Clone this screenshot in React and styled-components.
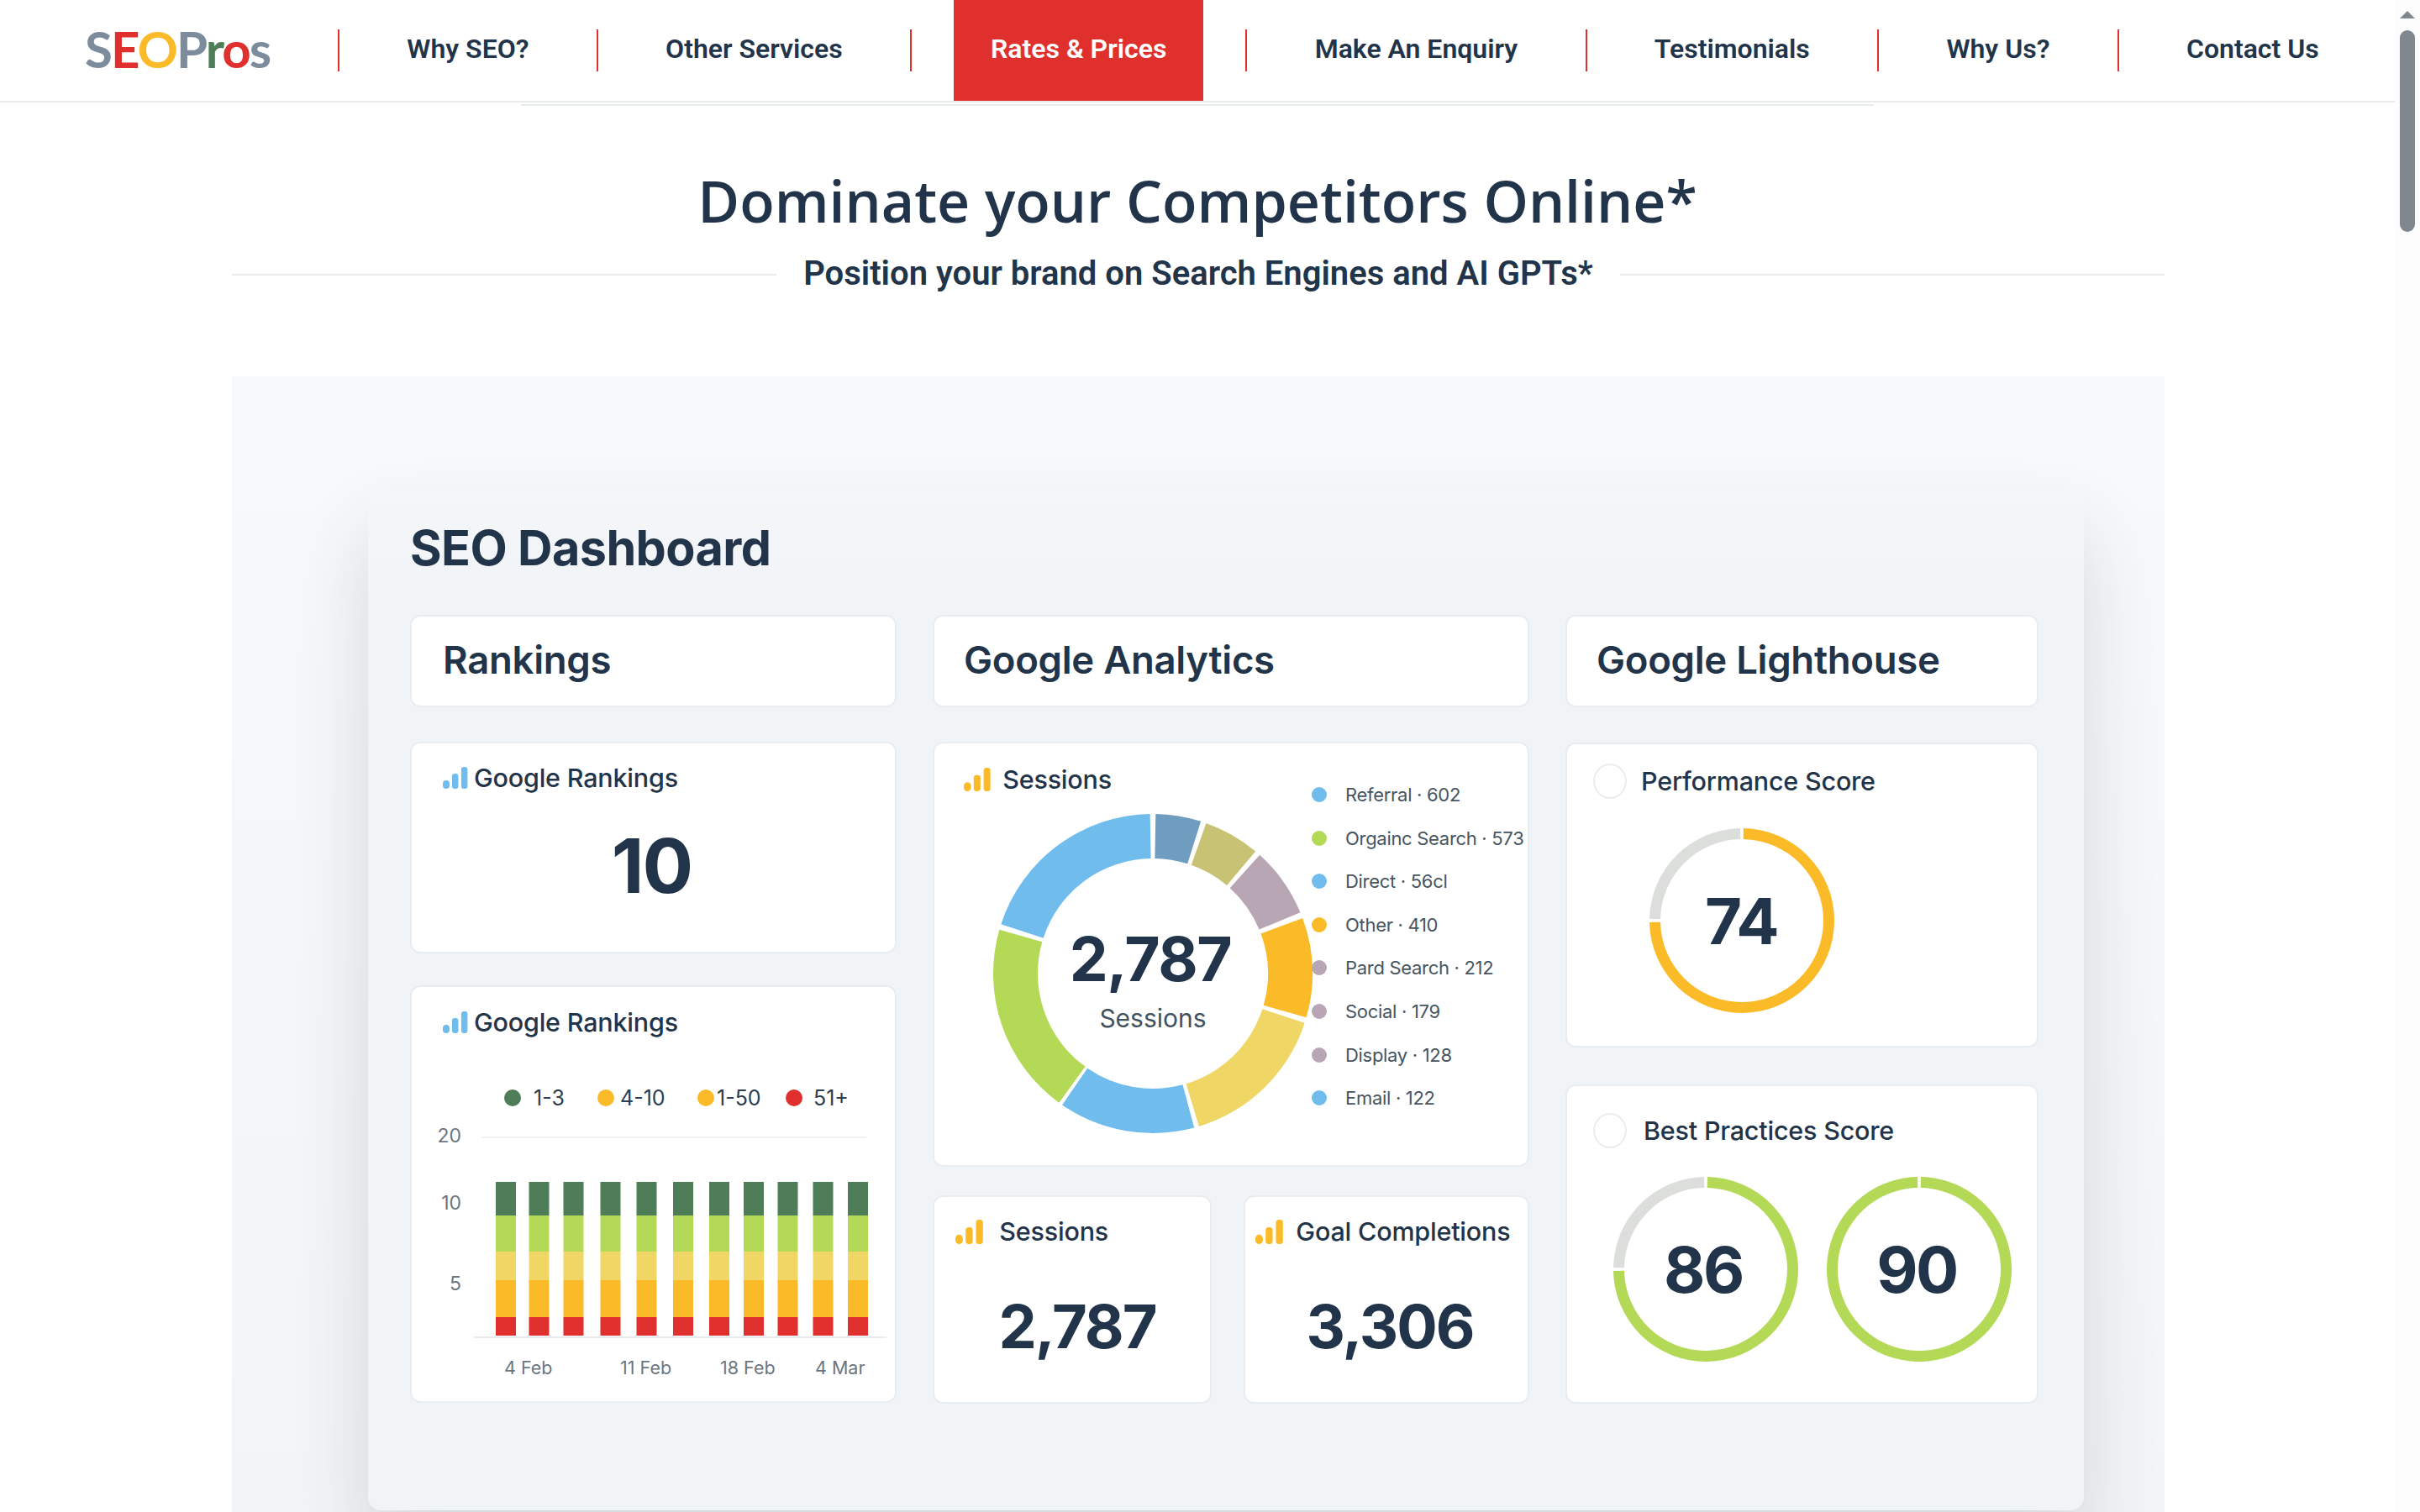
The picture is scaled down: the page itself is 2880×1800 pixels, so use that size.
import React from 'react';
import styled, { createGlobalStyle } from 'styled-components';

const INK = '#22344a';
const RED = '#e0302d';
const GREEN = '#4e7d57';
const LIME = '#b4d957';
const SOFT = '#f0d765';
const ORANGE = '#fbbb28';
const BLUE = '#70bced';
const MAUVE = '#b9a6b5';
const SLATE = '#6f9dc0';
const OLIVE = '#c7c274';
const STEEL = '#7c8c9c';

const GlobalStyle = createGlobalStyle`
  html, body { margin: 0; padding: 0; height: 100%; background: #fff; overflow: hidden; }
  * { box-sizing: border-box; }
`;

const Shell = styled.div`
  display: flex;
  width: 2880px;
  height: 1800px;
  overflow: hidden;
`;

const Page = styled.main`
  width: 2850px;
  flex: none;
  color: ${INK};
`;

const Rail = styled.div`
  width: 30px;
  flex: none;
  background: #fdfdfd;
  padding: 13px 6px 0;
  display: flex;
  flex-direction: column;
  align-items: center;
`;

const RailArrow = styled.div`
  width: 0;
  height: 0;
  border-left: 9px solid transparent;
  border-right: 9px solid transparent;
  border-bottom: 9px solid #80878f;
`;

const RailThumb = styled.div`
  width: 18px;
  height: 240px;
  margin-top: 14px;
  border-radius: 9px;
  background: #80878f;
`;

const Header = styled.header`
  height: 122px;
  display: flex;
  align-items: flex-start;
  border-bottom: 2px solid #e7ebec;
`;

const Logo = styled.div`
  width: 402px;
  height: 120px;
  padding: 24px 0 0 101px;
  font: 700 60px/68px Lato, sans-serif;
  letter-spacing: -2px;
  white-space: nowrap;
`;

const LogoLetter = styled.span`
  color: ${p => p.$color};
`;

const NavSep = styled.span`
  flex: none;
  width: 2px;
  height: 50px;
  margin-top: 35px;
  background: ${RED};
`;

const NavLink = styled.a`
  flex: none;
  height: 120px;
  padding: 0 ${p => (p.$active ? '44px' : '80.3px')} 4px;
  margin: 0 ${p => (p.$active ? '50px' : '0')};
  display: flex;
  align-items: center;
  font: 600 32px/40px Roboto, sans-serif;
  color: ${p => (p.$active ? '#fff' : INK)};
  background: ${p => (p.$active ? RED : 'transparent')};
`;

const Rule = styled.div`
  height: 2px;
  width: 1610px;
  margin: 2px 0 0 620px;
  background: #e7ebec;
`;

const Hero = styled.section`
  padding-top: 67px;
  text-align: center;
`;

const Title = styled.h1`
  margin: 0;
  font: 600 68px/92px "Open Sans", sans-serif;
  color: ${INK};
`;

const SubRow = styled.div`
  display: flex;
  align-items: center;
  width: 2300px;
  margin: 17px 0 0 276px;
  gap: 32px;
`;

const SubLine = styled.span`
  flex: 1;
  height: 2px;
  background: #e7ebec;
`;

const Sub = styled.h2`
  margin: 0 0 2px;
  font: 600 40px/48px Roboto, sans-serif;
  color: ${INK};
`;

const Panel = styled.section`
  width: 2300px;
  height: 1352px;
  margin: 96px 0 0 276px;
  padding: 136px 0 0 162px;
  background: linear-gradient(#f7f9fa, #f2f5f7);
`;

const Dashboard = styled.div`
  width: 2042px;
  height: 1214px;
  padding: 32px 0 0 50px;
  background: linear-gradient(#f4f6f8, #f1f4f7 140px);
  border-radius: 16px;
  box-shadow: 0 50px 90px rgba(50, 60, 70, 0.16);
`;

const DashTitle = styled.h2`
  margin: 0 0 43px;
  height: 73px;
  font: 700 57.5px/73px Inter, sans-serif;
  letter-spacing: -0.6px;
  color: ${INK};
`;

const Columns = styled.div`
  display: flex;
  align-items: flex-start;
  gap: 43px;
`;

const Column = styled.div`
  width: ${p => p.$w}px;
  flex: none;
  display: flex;
  flex-direction: column;
`;

const Card = styled.div`
  height: ${p => p.$h}px;
  margin-top: ${p => p.$mt || 0}px;
  width: ${p => (p.$w ? `${p.$w}px` : 'auto')};
  background: #fff;
  border: 2px solid #e9edf0;
  border-radius: 12px;
  flex: none;
`;

const HeadCard = styled(Card)`
  height: 110px;
  padding: 0 0 2px ${p => p.$pad}px;
  display: flex;
  align-items: center;
  font: 600 45.5px/56px Inter, sans-serif;
  letter-spacing: -0.3px;
  color: ${INK};
`;

const CardHead = styled.div`
  display: flex;
  align-items: center;
  gap: ${p => p.$gap}px;
  padding: ${p => p.$top}px 0 0 ${p => p.$left}px;
  font: 500 30.5px/40px Inter, sans-serif;
  letter-spacing: -0.2px;
  white-space: nowrap;
  color: ${INK};
`;

const BigValue = styled.div`
  text-align: center;
  padding-top: ${p => p.$top}px;
  margin-left: ${p => p.$shift || 0}px;
  font: 700 ${p => p.$size}px/1 Inter, sans-serif;
  letter-spacing: -2px;
  color: ${INK};
`;

const Legend = styled.div`
  display: flex;
  padding: 54px 0 0 ${p => p.$left}px;
  height: 103px;
  font: 400 25px/32px Inter, sans-serif;
  color: #2c3e50;
`;

const LegendItem = styled.span`
  display: flex;
  align-items: center;
  height: 32px;
  width: ${p => p.$w}px;
  gap: ${p => p.$gap}px;
`;

const Dot = styled.i`
  width: ${p => p.$size}px;
  height: ${p => p.$size}px;
  flex: none;
  border-radius: 50%;
  background: ${p => p.$color};
`;

const SessionsBody = styled.div`
  display: grid;
  grid-template-columns: 449px 1fr;
  height: 100%;
`;

const DonutWrap = styled.div`
  display: grid;
  place-items: center;
  width: 392px;
  height: 392px;
  margin: 15px 0 0 64px;
  > * { grid-area: 1 / 1; }
`;

const DonutCenter = styled.div`
  text-align: center;
  padding-top: 12px;
`;

const DonutValue = styled.div`
  padding-right: 6px;
  font: 700 73px/84px Inter, sans-serif;
  letter-spacing: -1.5px;
  color: ${INK};
`;

const DonutLabel = styled.div`
  margin-top: 9px;
  font: 400 30px/38px Inter, sans-serif;
  color: #42525f;
`;

const SourceList = styled.ul`
  list-style: none;
  margin: 0;
  padding: 46px 0 0 0;
  display: flex;
  flex-direction: column;
  gap: 21.6px;
`;

const Source = styled.li`
  display: flex;
  align-items: center;
  gap: 22px;
  height: 30px;
  font: 400 22px/30px Inter, sans-serif;
  letter-spacing: -0.3px;
  white-space: nowrap;
  color: #46555f;
`;

const BottomRow = styled.div`
  display: flex;
  gap: 38px;
  margin-top: 34px;
`;

const HollowMark = styled.span`
  width: 40px;
  height: 42px;
  flex: none;
  border-radius: 50%;
  border: 2px solid #e9edf0;
`;

const RingRow = styled.div`
  display: flex;
  padding: ${p => p.$top}px 0 0 ${p => p.$left}px;
  gap: ${p => p.$gap || 0}px;
`;

const RingWrap = styled.div`
  display: grid;
  place-items: center;
  width: 220px;
  height: 220px;
  > * { grid-area: 1 / 1; }
`;

const RingValue = styled.span`
  padding-right: ${p => p.$nudge || 0}px;
  font: 700 76px/1 Inter, sans-serif;
  letter-spacing: -2.5px;
  color: ${INK};
`;

const BarsIcon = ({ color, h = 26 }) => (
  <svg width={h * 1.15} height={h} viewBox="0 0 30 26" fill={color}>
    <rect x="0" y="16" width="8" height="10" rx="4" />
    <rect x="11" y="8" width="7.5" height="18" rx="3.2" />
    <rect x="22" y="0" width="7.5" height="26" rx="3.2" />
  </svg>
);

const polar = (cx, cy, r, deg) => {
  const a = ((deg - 90) * Math.PI) / 180;
  return [cx + r * Math.cos(a), cy + r * Math.sin(a)];
};

const slicePath = (from, to, rOut, rIn, c) => {
  const large = to - from > 180 ? 1 : 0;
  const [x1, y1] = polar(c, c, rOut, from);
  const [x2, y2] = polar(c, c, rOut, to);
  const [x3, y3] = polar(c, c, rIn, to);
  const [x4, y4] = polar(c, c, rIn, from);
  return `M${x1} ${y1}A${rOut} ${rOut} 0 ${large} 1 ${x2} ${y2}L${x3} ${y3}A${rIn} ${rIn} 0 ${large} 0 ${x4} ${y4}Z`;
};

const SLICES = [
  [1, 17.5, SLATE],
  [19.5, 40, OLIVE],
  [42, 67.5, MAUVE],
  [69.7, 106, ORANGE],
  [108, 163.2, SOFT],
  [165, 214.6, BLUE],
  [216, 286, LIME],
  [288, 359, BLUE],
];

const SOURCES = [
  ['Referral · 602', BLUE],
  ['Orgainc Search · 573', LIME],
  ['Direct · 56cl', BLUE],
  ['Other · 410', ORANGE],
  ['Pard Search · 212', MAUVE],
  ['Social · 179', MAUVE],
  ['Display · 128', MAUVE],
  ['Email · 122', BLUE],
];

const Ring = ({ value, color, track, nudge }) => {
  const c = 110;
  return (
    <RingWrap>
      <svg width="220" height="220" viewBox="0 0 220 220">
        {track && <path d={slicePath(271, 359, 110, 97, c)} fill="#dcdedb" />}
        <path d={slicePath(1, track ? 269 : 359, 110, 97, c)} fill={color} />
      </svg>
      <RingValue $nudge={nudge}>{value}</RingValue>
    </RingWrap>
  );
};

const BAR_X = [590, 629.5, 670.5, 714.5, 757.5, 801, 844, 885, 925.5, 967.5, 1009];
const SEGMENTS = [
  [1407, 40, GREEN],
  [1447, 43, LIME],
  [1490, 34, SOFT],
  [1524, 44, ORANGE],
  [1568, 22, RED],
];

// chart coordinates are page pixels, the viewBox shifts them into the card
const RankChart = () => (
  <svg width="574" height="306" viewBox="490 1340 574 306">
    <line x1="573" x2="1031" y1="1354" y2="1354" stroke="#f0f2f3" strokeWidth="2" />
    <line x1="564" x2="1055" y1="1592" y2="1592" stroke="#e8ecf0" strokeWidth="2" />
    <g fill="#6b7680" fontFamily="Inter, sans-serif" fontSize="23" textAnchor="end">
      <text x="549" y="1360">20</text>
      <text x="549" y="1440">10</text>
      <text x="549" y="1536">5</text>
    </g>
    {BAR_X.map(x =>
      SEGMENTS.map(([y, h, fill]) => (
        <rect key={`${x}-${y}`} x={x} y={y} width="24" height={h} fill={fill} />
      ))
    )}
    <g fill="#6b7680" fontFamily="Inter, sans-serif" fontSize="21.5">
      <text x="600" y="1636">4 Feb</text>
      <text x="738" y="1636">11 Feb</text>
      <text x="857" y="1636">18 Feb</text>
      <text x="970" y="1636">4 Mar</text>
    </g>
  </svg>
);

const NAV = ['Why SEO?', 'Other Services', 'Rates & Prices', 'Make An Enquiry', 'Testimonials', 'Why Us?', 'Contact Us'];
const LOGO = [['S', STEEL], ['E', RED], ['O', ORANGE], ['P', STEEL], ['r', GREEN], ['o', RED], ['s', STEEL]];

export default function App() {
  return (
    <Shell>
      <GlobalStyle />
      <Page>
        <Header>
          <Logo>
            {LOGO.map(([ch, color], i) => (
              <LogoLetter key={i} $color={color}>{ch}</LogoLetter>
            ))}
          </Logo>
          {NAV.map(label => (
            <React.Fragment key={label}>
              <NavSep />
              <NavLink $active={label === 'Rates & Prices'}>{label}</NavLink>
            </React.Fragment>
          ))}
        </Header>
        <Rule />
        <Hero>
          <Title>Dominate your Competitors Online*</Title>
          <SubRow>
            <SubLine />
            <Sub>Position your brand on Search Engines and AI GPTs*</Sub>
            <SubLine />
          </SubRow>
        </Hero>
        <Panel>
          <Dashboard>
            <DashTitle>SEO Dashboard</DashTitle>
            <Columns>
              <Column $w={579}>
                <HeadCard $pad={37}>Rankings</HeadCard>
                <Card $h={252} $mt={41}>
                  <CardHead $top={21} $left={37} $gap={7}>
                    <BarsIcon color={BLUE} />
                    Google Rankings
                  </CardHead>
                  <BigValue $size={90} $top={40} $shift={-4}>10</BigValue>
                </Card>
                <Card $h={497} $mt={38}>
                  <CardHead $top={22} $left={37} $gap={7}>
                    <BarsIcon color={BLUE} />
                    Google Rankings
                  </CardHead>
                  <Legend $left={110}>
                    <LegendItem $w={111} $gap={15}><Dot $size={20} $color={GREEN} />1-3</LegendItem>
                    <LegendItem $w={119} $gap={7}><Dot $size={20} $color={ORANGE} />4-10</LegendItem>
                    <LegendItem $w={105} $gap={3}><Dot $size={20} $color={ORANGE} />1-50</LegendItem>
                    <LegendItem $w={80} $gap={13}><Dot $size={20} $color={RED} />51+</LegendItem>
                  </Legend>
                  <RankChart />
                </Card>
              </Column>
              <Column $w={710}>
                <HeadCard $pad={35}>Google Analytics</HeadCard>
                <Card $h={506} $mt={41}>
                  <SessionsBody>
                    <div>
                      <CardHead $top={23} $left={35} $gap={14}>
                        <BarsIcon color={ORANGE} h={28} />
                        Sessions
                      </CardHead>
                      <DonutWrap>
                        <svg width="392" height="392" viewBox="0 0 392 392">
                          {SLICES.map(([from, to, fill]) => (
                            <path key={from} d={slicePath(from, to, 190, 137, 196)} fill={fill} />
                          ))}
                        </svg>
                        <DonutCenter>
                          <DonutValue>2,787</DonutValue>
                          <DonutLabel>Sessions</DonutLabel>
                        </DonutCenter>
                      </DonutWrap>
                    </div>
                    <SourceList>
                      {SOURCES.map(([label, color]) => (
                        <Source key={label}>
                          <Dot $size={18} $color={color} />
                          {label}
                        </Source>
                      ))}
                    </SourceList>
                  </SessionsBody>
                </Card>
                <BottomRow>
                  <Card $h={248} $w={332}>
                    <CardHead $top={21} $left={25} $gap={19}>
                      <BarsIcon color={ORANGE} h={29} />
                      Sessions
                    </CardHead>
                    <BigValue $size={72} $top={57} $shift={12}>2,787</BigValue>
                  </Card>
                  <Card $h={248} $w={340}>
                    <CardHead $top={21} $left={12} $gap={15}>
                      <BarsIcon color={ORANGE} h={29} />
                      Goal Completions
                    </CardHead>
                    <BigValue $size={72} $top={57} $shift={8}>3,306</BigValue>
                  </Card>
                </BottomRow>
              </Column>
              <Column $w={563}>
                <HeadCard $pad={35}>Google Lighthouse</HeadCard>
                <Card $h={363} $mt={42}>
                  <CardHead $top={23} $left={31} $gap={17}>
                    <HollowMark />
                    Performance Score
                  </CardHead>
                  <RingRow $top={35} $left={98}>
                    <Ring value="74" color={ORANGE} track nudge={2} />
                  </RingRow>
                </Card>
                <Card $h={380} $mt={44}>
                  <CardHead $top={32} $left={31} $gap={20}>
                    <HollowMark />
                    Best Practices Score
                  </CardHead>
                  <RingRow $top={34} $left={55} $gap={34}>
                    <Ring value="86" color={LIME} track nudge={6} />
                    <Ring value="90" color={LIME} nudge={6} />
                  </RingRow>
                </Card>
              </Column>
            </Columns>
          </Dashboard>
        </Panel>
      </Page>
      <Rail>
        <RailArrow />
        <RailThumb />
      </Rail>
    </Shell>
  );
}
